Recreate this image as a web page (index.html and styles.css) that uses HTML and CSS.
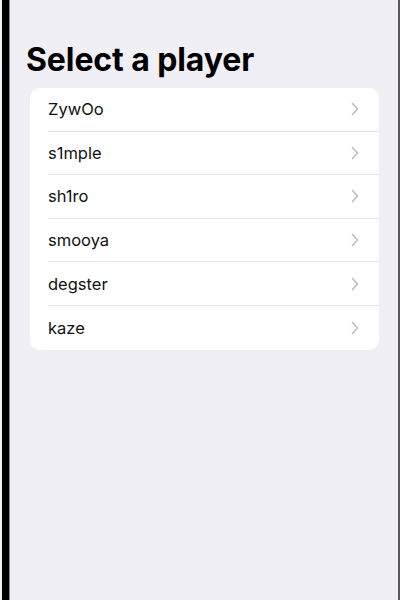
FILE: index.html
```html
<!DOCTYPE html>
<html>
<head>
<meta charset="utf-8">
<link rel="stylesheet" href="styles.css">
</head>
<body>
<div class="device">
  <div class="screen">
    <h1 class="title">Select a player</h1>
    <ul class="list">
      <li class="row"><span class="name">ZywOo</span><svg class="chev" viewBox="0 0 8 14"><path d="M1.5 1.5 L6.5 7 L1.5 12.5"/></svg></li>
      <li class="row"><span class="name">s1mple</span><svg class="chev" viewBox="0 0 8 14"><path d="M1.5 1.5 L6.5 7 L1.5 12.5"/></svg></li>
      <li class="row"><span class="name">sh1ro</span><svg class="chev" viewBox="0 0 8 14"><path d="M1.5 1.5 L6.5 7 L1.5 12.5"/></svg></li>
      <li class="row"><span class="name">smooya</span><svg class="chev" viewBox="0 0 8 14"><path d="M1.5 1.5 L6.5 7 L1.5 12.5"/></svg></li>
      <li class="row"><span class="name">degster</span><svg class="chev" viewBox="0 0 8 14"><path d="M1.5 1.5 L6.5 7 L1.5 12.5"/></svg></li>
      <li class="row"><span class="name">kaze</span><svg class="chev" viewBox="0 0 8 14"><path d="M1.5 1.5 L6.5 7 L1.5 12.5"/></svg></li>
    </ul>
  </div>
</div>
</body>
</html>
```

FILE: styles.css
```css
html, body {
  margin: 0;
  padding: 0;
  height: 100%;
  background: #f4f4f6;
}
body {
  font-family: Inter, "Liberation Sans", sans-serif;
}
.device {
  height: 600px;
  margin-left: 2px;
  border-left: 7px solid #000;
  box-sizing: border-box;
}
.screen {
  height: 100%;
  box-sizing: border-box;
  background: #f0eff5;
  border-left: 1px solid #8a8a8e;
  border-right: 2px solid #5a5a5e;
  padding: 0 19px 0 20px;
  overflow: hidden;
}
.title {
  margin: 40px 0 0 -4px;
  font-size: 32px;
  font-weight: 700;
  line-height: 40px;
  color: #000;
  letter-spacing: -0.1px;
}
.list {
  list-style: none;
  margin: 8px 0 0 0;
  padding: 0 0 0 18px;
  background: #fff;
  border-radius: 10px;
}
.row {
  height: 43.6px;
  display: flex;
  align-items: center;
  justify-content: space-between;
  padding-right: 20px;
  border-bottom: 1px solid #e4e4e8;
  box-sizing: border-box;
}
.row:last-child {
  border-bottom: none;
}
.name {
  font-size: 16.5px;
  color: #111;
}
.chev {
  width: 8px;
  height: 14px;
  fill: none;
  stroke: #bdbdc2;
  stroke-width: 1.6;
  stroke-linecap: round;
  stroke-linejoin: round;
}
```
